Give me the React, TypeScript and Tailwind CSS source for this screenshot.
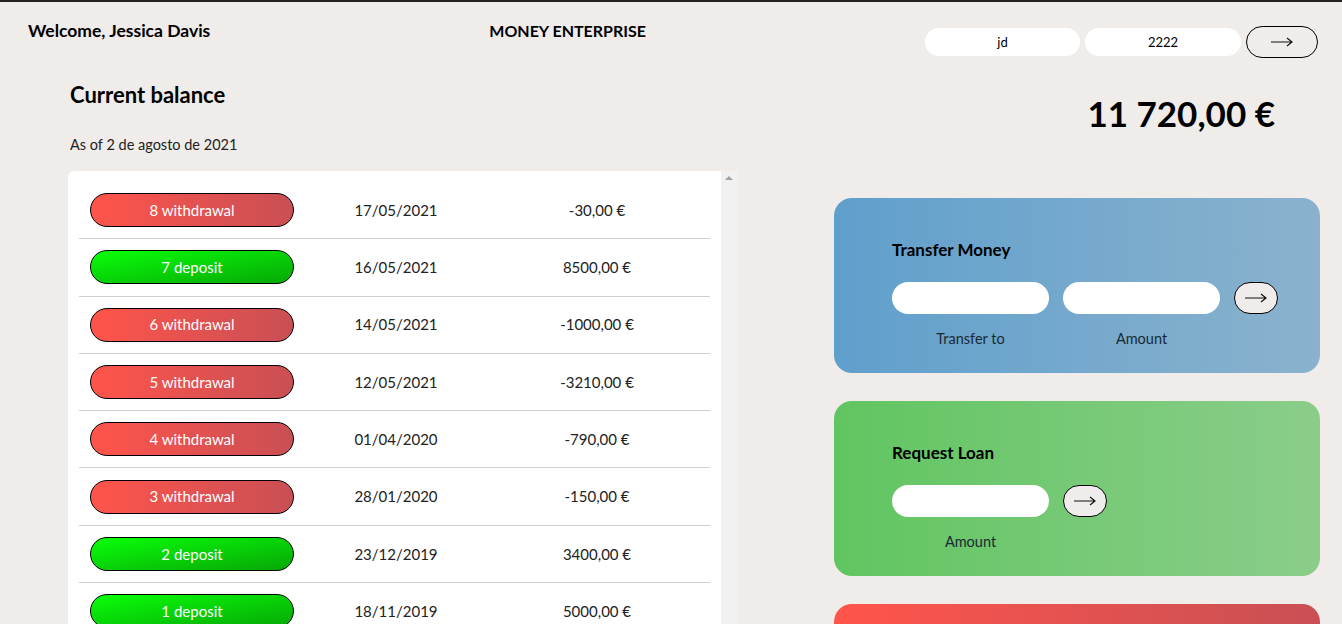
import React from 'react';

type Movement = {
  n: number;
  kind: 'withdrawal' | 'deposit';
  date: string;
  amount: string;
};

const movements: Movement[] = [
  { n: 8, kind: 'withdrawal', date: '17/05/2021', amount: '-30,00 €' },
  { n: 7, kind: 'deposit', date: '16/05/2021', amount: '8500,00 €' },
  { n: 6, kind: 'withdrawal', date: '14/05/2021', amount: '-1000,00 €' },
  { n: 5, kind: 'withdrawal', date: '12/05/2021', amount: '-3210,00 €' },
  { n: 4, kind: 'withdrawal', date: '01/04/2020', amount: '-790,00 €' },
  { n: 3, kind: 'withdrawal', date: '28/01/2020', amount: '-150,00 €' },
  { n: 2, kind: 'deposit', date: '23/12/2019', amount: '3400,00 €' },
  { n: 1, kind: 'deposit', date: '18/11/2019', amount: '5000,00 €' },
];

const Arrow = () => (
  <svg width="22" height="10" viewBox="0 0 22 10" fill="none" stroke="#111" strokeWidth="1.2">
    <path d="M0 5h21M16 1l5 4-5 4" />
  </svg>
);

const ArrowButton = ({ wide }: { wide?: boolean }) => (
  <button
    className={
      wide
        ? 'w-[72px] h-[32px] rounded-full border border-black bg-[#efeceb] flex items-center justify-center'
        : 'w-[44px] h-[32px] rounded-full border border-black bg-[#efeceb] flex items-center justify-center'
    }
  >
    <Arrow />
  </button>
);

const MovementRow = ({ m }: { m: Movement }) => (
  <div className="grid grid-cols-[225px_184px_218px] items-center h-[57.3px] border-b border-[#cfcfcf] mx-[11px] text-[15px] text-[#222]">
    <div className="pl-[11px]">
      <div
        className={
          m.kind === 'withdrawal'
            ? 'w-[204px] h-[34px] rounded-full border border-black bg-gradient-to-r from-[#ff544a] to-[#c94f54] text-white flex items-center justify-center'
            : 'w-[204px] h-[34px] rounded-full border border-black bg-gradient-to-br from-[#0aff0a] to-[#06a806] text-white flex items-center justify-center'
        }
      >
        {m.n} {m.kind}
      </div>
    </div>
    <div className="text-center">{m.date}</div>
    <div className="text-center">{m.amount}</div>
  </div>
);

export default function App() {
  return (
    <div
      className="h-[624px] overflow-hidden bg-[#efecea] border-t-2 border-[#222] text-black"
      style={{ fontFamily: 'Lato, "Noto Sans", sans-serif' }}
    >
      {/* header */}
      <header className="flex justify-between items-start pl-[28px] pr-[24px] pt-[19px]">
        <div className="text-[17.5px] font-bold leading-[20px]">Welcome, Jessica Davis</div>
        <div className="text-[16px] font-bold leading-[20px]">MONEY ENTERPRISE</div>
        <div className="flex items-center gap-[5px] pt-[5px]">
          <input
            defaultValue="jd"
            className="w-[155px] h-[28px] rounded-full bg-white text-center text-[13px] outline-none"
          />
          <input
            defaultValue="2222"
            className="w-[156px] h-[28px] rounded-full bg-white text-center text-[13px] outline-none"
          />
          <ArrowButton wide />
        </div>
      </header>

      <main className="grid grid-cols-[669px_1fr] gap-x-[97px] pl-[68px] pr-[22px] pt-[22px]">
        {/* left column */}
        <div>
          <h2 className="pl-[2px] text-[22px] font-bold leading-[30px]">Current balance</h2>
          <p className="pl-[2px] mt-[25px] text-[14.5px] leading-[20px] text-[#222]">As of 2 de agosto de 2021</p>

          <div className="mt-[16px] flex h-[460px] bg-white rounded-tl-[6px]">
            <div className="flex-1 pt-[11px]">
              {movements.map((m) => (
                <MovementRow key={m.n} m={m} />
              ))}
            </div>
            <div className="w-[16px] bg-[#f1f1f1] flex justify-center pt-[5px]">
              <div className="w-0 h-0 border-l-[4px] border-r-[4px] border-b-[4px] border-l-transparent border-r-transparent border-b-[#a3a3a3]" />
            </div>
          </div>
        </div>

        {/* right column */}
        <div>
          <div className="flex justify-end pr-[45px] pt-[11px] h-[118px]">
            <div className="text-[35px] font-bold leading-[44px]">11 720,00 €</div>
          </div>

          <div className="flex flex-col gap-[28px]">
            <section className="h-[175px] rounded-[18px] bg-gradient-to-r from-[#5f9fcc] to-[#8ab2cd] pl-[58px] pt-[40px]">
              <h3 className="text-[17px] font-bold leading-[24px]">Transfer Money</h3>
              <div className="mt-[20px] flex items-center">
                <input className="w-[157px] h-[32px] rounded-full bg-white outline-none" />
                <input className="ml-[14px] w-[157px] h-[32px] rounded-full bg-white outline-none" />
                <div className="ml-[14px]">
                  <ArrowButton />
                </div>
              </div>
              <div className="flex mt-[14px] text-[14.5px] text-[#1a2a33]">
                <span className="w-[157px] text-center">Transfer to</span>
                <span className="ml-[14px] w-[157px] text-center">Amount</span>
              </div>
            </section>

            <section className="h-[175px] rounded-[18px] bg-gradient-to-r from-[#60c560] to-[#8acd8a] pl-[58px] pt-[40px]">
              <h3 className="text-[17px] font-bold leading-[24px]">Request Loan</h3>
              <div className="mt-[20px] flex items-center">
                <input className="w-[157px] h-[32px] rounded-full bg-white outline-none" />
                <div className="ml-[14px]">
                  <ArrowButton />
                </div>
              </div>
              <div className="flex mt-[14px] text-[14.5px] text-[#1a2a33]">
                <span className="w-[157px] text-center">Amount</span>
              </div>
            </section>

            <section className="h-[175px] rounded-[18px] bg-gradient-to-r from-[#ff544a] to-[#c94f54]" />
          </div>
        </div>
      </main>
    </div>
  );
}
